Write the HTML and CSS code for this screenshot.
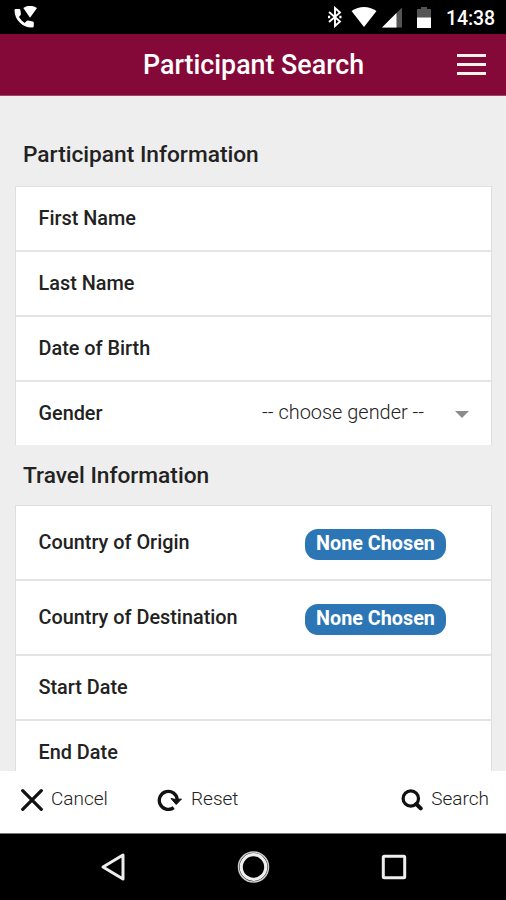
FILE: index.html
```html
<!DOCTYPE html>
<html lang="en">
<head>
<meta charset="utf-8">
<title>Participant Search</title>
<link rel="stylesheet" href="styles.css">
</head>
<body>
<div class="status">
  <svg class="call" width="24" height="24" viewBox="0 0 24 24"><path fill="#fff" d="M.500 4.200q0-1.200 1.200-1.200h3.600q1 0 1.100 1.200l.5 3.600q.1.800-.5 1.400L5 11q2 3.600 5.600 6l2-2q.6-.6 1.400-.4l4.800.9q1 .2 1 1.200v3.400q0 1.300-1.300 1.300C9.500 22 .5 14.500.5 4.200z"/><path fill="#fff" d="M9.300 2q6.500-4.500 13.700 0L16 11.800z"/></svg>
  <div class="status-right">
    <svg class="bt" width="14" height="22" viewBox="0 0 14 22"><path d="M1 6l11 9.500-5 4.500V2l5 4.500L1 16" fill="none" stroke="#fff" stroke-width="1.900"/><path d="M0 9.800h2.200v2.400H0zM11.300 9.800h2.200v2.400h-2.200z" fill="#fff"/></svg>
    <svg class="wifi" width="26" height="22" viewBox="0 0 26 22"><path d="M.5 5Q13-2.800 25.500 5L13 21z" fill="#fff"/></svg>
    <svg class="cell" width="20" height="22" viewBox="0 0 20 22"><path d="M20 1.500v20H0z" fill="#555"/><path d="M14.500 7V21.500H0z" fill="#fff"/></svg>
    <svg class="battery" width="14" height="22" viewBox="0 0 14 22"><path d="M0 3h4V1h6v2h4v9H0z" fill="#555"/><path d="M0 11.500h14V22H0z" fill="#fff"/></svg>
    <span class="clock">14:38</span>
  </div>
</div>
<header class="header">
  <h1 class="title"><span>Participant Search</span></h1>
  <div class="menu"><i></i><i></i><i></i></div>
</header>
<main class="content">
  <h2 class="heading first"><span>Participant Information</span></h2>
  <div class="card card-info">
    <div class="row"><span class="label">First Name</span></div>
    <div class="row"><span class="label">Last Name</span></div>
    <div class="row"><span class="label">Date of Birth</span></div>
    <div class="row"><span class="label">Gender</span><span class="select"><span>-- choose gender --</span><i class="caret"></i></span></div>
  </div>
  <h2 class="heading second"><span>Travel Information</span></h2>
  <div class="card">
    <div class="row tall"><span class="label">Country of Origin</span><span class="pill">None Chosen</span></div>
    <div class="row tall"><span class="label">Country of Destination</span><span class="pill">None Chosen</span></div>
    <div class="row"><span class="label">Start Date</span></div>
    <div class="row"><span class="label">End Date</span></div>
  </div>
</main>
<footer class="actions">
  <div class="action cancel"><svg width="22" height="22" viewBox="0 0 22 22"><path d="M1.700 1.700l18.600 18.600M20.300 1.700L1.700 20.300" stroke="#111" stroke-width="3.200" stroke-linecap="round"/></svg><span>Cancel</span></div>
  <div class="action reset"><svg width="25" height="22" viewBox="0 0 25 22"><path d="M16.700 18.600A9 9 0 1 1 20.300 11" fill="none" stroke="#111" stroke-width="3.300"/><path d="M14 9.500l5 1 5.500-.5-5.300 5.500z" fill="#111" stroke="#111" stroke-linejoin="round"/></svg><span>Reset</span></div>
  <div class="action search"><svg width="22" height="22" viewBox="0 0 22 22"><circle cx="9.800" cy="9.500" r="7.700" fill="none" stroke="#111" stroke-width="3.200"/><path d="M15.300 15l4.400 4.400" stroke="#111" stroke-width="4" stroke-linecap="round"/></svg><span>Search</span></div>
</footer>
<nav class="nav">
  <svg class="back" width="26" height="30" viewBox="0 0 26 30"><path d="M23 3v24L3 15z" fill="none" stroke="#eee" stroke-width="3" stroke-linejoin="round"/></svg>
  <svg class="home" width="34" height="34" viewBox="0 0 34 34"><circle cx="16.500" cy="17" r="15" fill="none" stroke="#ccc" stroke-width="1.500"/><circle cx="16.500" cy="17" r="12.300" fill="none" stroke="#eee" stroke-width="3.200"/></svg>
  <svg class="recent" width="26" height="26" viewBox="0 0 26 26"><rect x="2.300" y="2.300" width="21.400" height="21.400" rx="1" fill="none" stroke="#eee" stroke-width="3"/></svg>
</nav>
</body>
</html>
```
FILE: styles.css
```css
* { box-sizing: border-box; }
body {
  margin: 0;
  width: 506px;
  height: 900px;
  overflow: hidden;
  display: flex;
  flex-direction: column;
  background: #eee;
  color: #222;
  font-family: Roboto, sans-serif;
}
h1, h2 { margin: 0; font-weight: 500; }
svg { display: block; flex: none; }

.status {
  height: 34px;
  flex: none;
  background: #000;
  color: #fff;
  display: flex;
  justify-content: space-between;
  padding: 6px 11px 0 14px;
}
.status-right { display: flex; align-items: flex-start; }
.wifi { margin-left: 9px; }
.cell { margin-left: 5px; }
.battery { margin-left: 15px; }
.clock {
  margin-left: 15px;
  width: 49px;
  font-size: 19.500px;
  letter-spacing: -0.1px;
  line-height: 26px;
  font-weight: 500;
  white-space: nowrap;
}

.header {
  height: 62px;
  flex: none;
  background: #850938;
  border-bottom: 1px solid #984860;
  display: flex;
  align-items: center;
  justify-content: space-between;
  padding: 0 20px 0 143px;
}
.title { color: #fff; font-size: 26.800px; line-height: 30px; white-space: nowrap; }
.menu { width: 29px; display: grid; gap: 6px; padding-bottom: 1px; }
.menu i { height: 3px; background: #fff3ea; }

.content { height: 675px; flex: none; overflow: hidden; padding: 0 14px 0 15px; }
.heading { font-size: 22.700px; line-height: 26px; padding-left: 8px; white-space: nowrap; }
.first { padding-top: 46px; height: 90px; }
.second { padding-top: 18px; height: 60px; }
.card { background: #fff; border: 1px solid #dfdfdf; }
.card-info { border-bottom: 0; height: 259px; }
.row {
  height: 65px;
  display: flex;
  align-items: center;
  justify-content: space-between;
  padding: 0 22px 0 22.500px;
  border-bottom: 2px solid #e4e4e4;
}
.card-info .row:last-child { border-bottom: 0; padding-bottom: 2px; }
.tall { height: 75px; padding-right: 45px; }
.label { font-size: 19.850px; line-height: 24px; font-weight: 500; white-space: nowrap; }
.select {
  display: flex;
  align-items: center;
  gap: 31px;
  font-size: 19.950px;
  line-height: 24px;
  font-weight: 300;
  padding-bottom: 3px;
  white-space: nowrap;
}
.caret {
  border: 7px solid transparent;
  border-top-color: #8c8c8c;
  border-bottom: 0;
  margin-top: 4px;
}
.pill {
  width: 141px;
  height: 31px;
  margin-top: 3px;
  border-radius: 13px;
  background: #2c76b5;
  color: #fff;
  font-size: 19.800px;
  line-height: 30px;
  font-weight: 700;
  text-align: center;
  white-space: nowrap;
}

.actions {
  height: 62px;
  flex: none;
  background: #fff;
  display: flex;
  padding: 0 17px 4px 21px;
  font-size: 19px;
  font-weight: 300;
}
.action { display: flex; align-items: center; }
.action span { padding-bottom: 2px; white-space: nowrap; line-height: 24px; }
.cancel { gap: 8px; width: 136px; }
.reset { gap: 9px; }
.search { gap: 8px; margin-left: auto; }

.nav {
  flex: 1;
  background: #000;
  border-top: 1px solid #777;
  display: flex;
  align-items: center;
  padding-left: 100px;
}
.home { margin-left: 111px; }
.recent { margin-left: 110px; }
```
